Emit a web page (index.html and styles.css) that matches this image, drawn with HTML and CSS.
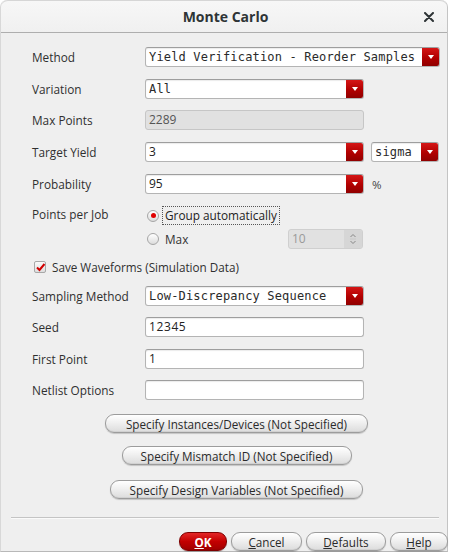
FILE: index.html
```html
<!DOCTYPE html>
<html>
<head>
<meta charset="utf-8">
<link rel="stylesheet" href="styles.css">
</head>
<body>
<div class="window">
  <header class="titlebar">
    <span class="title">Monte Carlo</span>
    <svg class="close" width="10" height="10" viewBox="0 0 10 10"><path d="M1 1L9 9M9 1L1 9" stroke="#2e3436" stroke-width="2" stroke-linecap="round"/></svg>
  </header>
  <main class="form">
    <div class="row r-method">
      <span class="lbl">Method</span>
      <div class="combo w-method"><span class="val mono">Yield Verification - Reorder Samples</span><span class="arrow"></span></div>
    </div>
    <div class="row r-gap12">
      <span class="lbl">Variation</span>
      <div class="combo w-std"><span class="val mono">All</span><span class="arrow"></span></div>
    </div>
    <div class="row r-gap11">
      <span class="lbl">Max Points</span>
      <div class="field disabled w-std"><span class="val">2289</span></div>
    </div>
    <div class="row r-gap12">
      <span class="lbl">Target Yield</span>
      <div class="combo w-std"><span class="val">3</span><span class="arrow"></span></div>
      <div class="combo w-sigma"><span class="val mono">sigma</span><span class="arrow"></span></div>
    </div>
    <div class="row r-gap12">
      <span class="lbl">Probability</span>
      <div class="combo w-std"><span class="val">95</span><span class="arrow"></span></div>
      <span class="unit">%</span>
    </div>
    <div class="ppj">
      <span class="lbl lbl-top">Points per Job</span>
      <div class="radios">
        <div class="radio-row">
          <span class="radio on"></span>
          <span class="focus">Group automatically</span>
        </div>
        <div class="radio-row r2">
          <span class="radio"></span>
          <span class="rtext">Max</span>
          <div class="spin">
            <span class="val">10</span>
            <span class="spin-btns">
              <svg width="8" height="14" viewBox="0 0 8 14"><path d="M1.5 5L4 2.5L6.5 5" fill="none" stroke="#888" stroke-width="1"/><path d="M1.5 9L4 11.5L6.5 9" fill="none" stroke="#888" stroke-width="1"/><path d="M1 7H7" stroke="#c8c8c8" stroke-width="1"/></svg>
            </span>
          </div>
        </div>
      </div>
    </div>
    <div class="check-row">
      <span class="check"><svg width="11" height="11" viewBox="0 0 11 11"><path d="M2 5.5L4.5 8L9.5 2" fill="none" stroke="#d00000" stroke-width="2"/></svg></span>
      <span class="ctext">Save Waveforms (Simulation Data)</span>
    </div>
    <div class="row r-gap10">
      <span class="lbl">Sampling Method</span>
      <div class="combo w-std"><span class="val mono">Low-Discrepancy Sequence</span><span class="arrow"></span></div>
    </div>
    <div class="row r-gap11">
      <span class="lbl">Seed</span>
      <div class="field w-std"><span class="val seed">12345</span></div>
    </div>
    <div class="row r-gap12">
      <span class="lbl">First Point</span>
      <div class="field w-std"><span class="val">1</span></div>
    </div>
    <div class="row r-gap11">
      <span class="lbl">Netlist Options</span>
      <div class="field w-std"></div>
    </div>
    <div class="btns">
      <button class="btn b-inst">Specify Instances/Devices (Not Specified)</button>
      <button class="btn b-mis">Specify Mismatch ID (Not Specified)</button>
      <button class="btn b-des">Specify Design Variables (Not Specified)</button>
    </div>
  </main>
  <div class="sep"></div>
  <footer class="actions">
    <button class="btn ok"><u>O</u>K</button>
    <button class="btn b-cancel"><u>C</u>ancel</button>
    <button class="btn b-def"><u>D</u>efaults</button>
    <button class="btn b-help"><u>H</u>elp</button>
  </footer>
</div>
</body>
</html>
```

FILE: styles.css
```css
* { box-sizing: border-box; }
html, body { margin: 0; padding: 0; }
body {
  background: #ffffff;
  font-family: "Open Sans", "Noto Sans", sans-serif;
  font-size: 12px;
  color: #333;
  width: 450px;
  height: 552px;
  overflow: hidden;
}
.window {
  width: 448px;
  height: 552px;
  background: #efefef;
  border-right: 1px solid #c4c4c4;
  border-left: 1px solid #d8d8d8;
  border-bottom: 1px solid #b8b8b8;
  border-radius: 7px 7px 0 0;
  display: flex;
  flex-direction: column;
}
.titlebar {
  height: 33px;
  flex: none;
  background: linear-gradient(#f7f7f7, #f0f0f0);
  border-top: 1px solid #d6d6d6;
  border-bottom: 1px solid #aeaeae;
  border-radius: 7px 7px 0 0;
  display: flex;
  align-items: center;
  justify-content: center;
  position: relative;
}
.title {
  font-weight: 700;
  font-size: 14px;
  color: #2e3436;
  margin-left: 3px;
}
.close {
  position: absolute;
  right: 13px;
  top: 11px;
}
.form {
  padding: 14px 0 0 31px;
  display: flex;
  flex-direction: column;
}
.row {
  display: flex;
  align-items: center;
  height: 20px;
}
.r-gap12 { margin-top: 12px; }
.r-gap11 { margin-top: 11px; }
.r-gap10 { margin-top: 10px; }
.lbl {
  width: 113px;
  flex: none;
  color: #2f2f2f;
  line-height: 16px;
  font-size: 11.8px;
}
.combo, .field {
  height: 20px;
  display: flex;
  align-items: center;
  background: #fff;
  border: 1px solid #b4b4b4;
  border-top-color: #9e9e9e;
  border-radius: 3px;
  box-shadow: inset 0 1px 1px rgba(0,0,0,0.08);
  position: relative;
  overflow: hidden;
}
.w-method { width: 295px; }
.w-std { width: 219px; }
.w-sigma { width: 68px; margin-left: 7px; }
.val {
  flex: 1;
  padding-left: 3px;
  color: #222;
  white-space: nowrap;
  overflow: hidden;
  line-height: 18px;
  font-size: 12px;
}
.mono {
  font-family: "DejaVu Sans Mono", "Liberation Mono", monospace;
  letter-spacing: 0.17px;
  font-size: 12px;
  color: #2a2a2a;
}
.seed { letter-spacing: 0.6px; }
.arrow {
  width: 18px;
  height: 20px;
  margin: -1px -1px -1px 0;
  flex: none;
  background: linear-gradient(#d81818, #b00000 55%, #8c0000);
  border-radius: 0 3px 3px 0;
  position: relative;
}
.arrow::after {
  content: "";
  position: absolute;
  left: 6px;
  top: 8px;
  border-left: 3.5px solid transparent;
  border-right: 3.5px solid transparent;
  border-top: 4px solid #fff;
}
.disabled {
  background: #e1e1e1;
  border-color: #c6c6c6;
  box-shadow: none;
}
.disabled .val { color: #555; }
.unit {
  margin-left: 8px;
  color: #444;
  font-size: 11.5px;
}
.ppj {
  display: flex;
  margin-top: 12px;
}
.radios {
  display: flex;
  flex-direction: column;
}
.radio-row {
  display: flex;
  align-items: center;
  height: 19px;
}
.radio-row.r2 {
  margin-top: 4px;
  height: 20px;
}
.radio {
  width: 12px;
  height: 12px;
  border-radius: 50%;
  border: 1px solid #a6a6a6;
  background: linear-gradient(#ffffff, #dcdcdc);
  margin-left: 2px;
  margin-right: 3px;
  position: relative;
  flex: none;
}
.radio.on::after {
  content: "";
  position: absolute;
  left: 2.5px;
  top: 2.5px;
  width: 5px;
  height: 5px;
  border-radius: 50%;
  background: #e00000;
}
.focus {
  border: 1px dotted #555;
  padding: 0 2px 0 2px;
  line-height: 17px;
  color: #222;
  font-size: 11.8px;
}
.rtext {
  margin-left: 3px;
  color: #333;
  width: 123px;
  font-size: 11.8px;
}
.spin {
  width: 75px;
  height: 20px;
  display: flex;
  align-items: center;
  background: #e1e1e1;
  border: 1px solid #cfcfcf;
  border-radius: 3px;
}
.spin .val { color: #9a9a9a; }
.spin-btns {
  width: 18px;
  height: 18px;
  background: #d6d6d6;
  display: flex;
  align-items: center;
  justify-content: center;
  border-radius: 0 2px 2px 0;
}
.check-row {
  display: flex;
  align-items: center;
  height: 18px;
  margin-top: 9px;
  padding-left: 2px;
}
.check {
  width: 12px;
  height: 12px;
  border: 1px solid #a8a8a8;
  border-radius: 2px;
  background: linear-gradient(#fafafa, #dedede);
  display: flex;
  align-items: center;
  justify-content: center;
}
.check svg { margin: -1px; }
.ctext {
  margin-left: 6px;
  color: #2f2f2f;
  font-size: 11.7px;
}
.btns {
  display: flex;
  flex-direction: column;
  align-items: center;
  width: 409px;
  margin-top: 14px;
}
.btn {
  height: 19px;
  padding: 0;
  border: 1px solid #9c9c9c;
  border-radius: 9px;
  background: linear-gradient(#ffffff, #f0f0f0 45%, #dcdcdc);
  box-shadow: 0 1px 1px rgba(0,0,0,0.18), inset 0 -1px 0 rgba(0,0,0,0.05);
  font-family: "Open Sans", "Noto Sans", sans-serif;
  font-size: 11.7px;
  color: #2a2a2a;
  line-height: 16px;
}
.b-inst { width: 263px; }
.b-mis { width: 230px; margin-top: 13px; }
.b-des { width: 253px; margin-top: 15px; }
.sep {
  margin: 18px 8px 0 10px;
  height: 2px;
  border-top: 1px solid #c4c4c4;
  border-bottom: 1px solid #fafafa;
}
.actions {
  display: flex;
  justify-content: flex-end;
  gap: 4px;
  margin-top: 13px;
  margin-right: -1px;
}
.btn u { text-decoration: underline; }
.ok {
  width: 48px;
  background: linear-gradient(#e32626, #c30000 50%, #a00000);
  border-color: #7e0000;
  color: #fff;
  font-weight: 700;
}
.b-cancel { width: 71px; }
.b-def { width: 80px; }
.b-help { width: 58px; }
```
